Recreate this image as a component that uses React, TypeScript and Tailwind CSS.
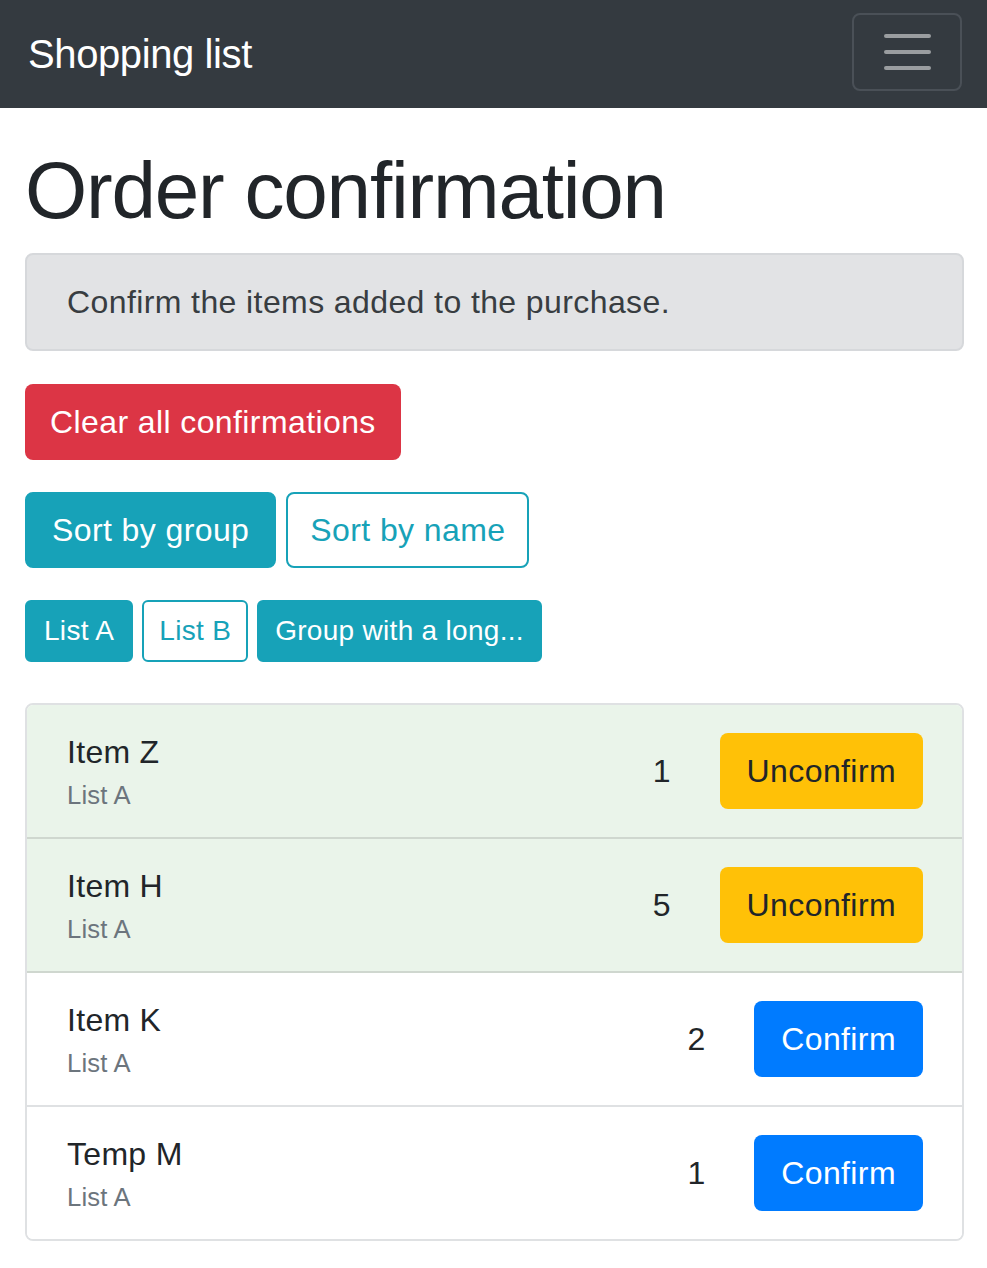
// Order confirmation page – Bootstrap-like look, rendered at 2x scale

const items = [
  { name: "Item Z", group: "List A", qty: 1, confirmed: true },
  { name: "Item H", group: "List A", qty: 5, confirmed: true },
  { name: "Item K", group: "List A", qty: 2, confirmed: false },
  { name: "Temp M", group: "List A", qty: 1, confirmed: false },
];

export default function App() {
  return (
    <div className="min-h-screen bg-white text-[#212529] font-['Liberation_Sans',Arial,sans-serif]">
      {/* ====== Navbar ====== */}
      <nav className="h-[108px] bg-[#343a40] flex items-center justify-between pl-[28px] pr-[25px]">
        <span className="text-white text-[40px] leading-[60px] tracking-[-0.4px]">Shopping list</span>
        <button className="-mt-[4px] w-[110px] h-[78px] rounded-[8px] border-2 border-[#4a5057] flex flex-col items-center justify-center gap-[12px]">
          <span className="block w-[47px] h-[4px] rounded-full bg-[#9a9da0]" />
          <span className="block w-[47px] h-[4px] rounded-full bg-[#9a9da0]" />
          <span className="block w-[47px] h-[4px] rounded-full bg-[#9a9da0]" />
        </button>
      </nav>

      {/* ====== Main ====== */}
      <main className="pl-[25px] pr-[23px] pt-[35px]">
        <h1 className="text-[80px] leading-[96px] tracking-[-1.2px] mb-[14px]">Order confirmation</h1>

        <div className="bg-[#e2e3e5] border-2 border-[#d6d8db] rounded-[8px] px-[40px] py-[23px] text-[#383d41] text-[32px] leading-[48px] tracking-[0.4px] mb-[33px]">
          Confirm the items added to the purchase.
        </div>

        <button className="h-[76px] px-[25px] rounded-[8px] bg-[#dc3545] text-white text-[32px] tracking-[0.4px] mb-[32px]">
          Clear all confirmations
        </button>

        <div className="flex gap-[10px] mb-[32px]">
          <button className="h-[76px] px-[25px] rounded-[8px] bg-[#17a2b8] border-2 border-[#17a2b8] text-white text-[32px] tracking-[0.4px]">
            Sort by group
          </button>
          <button className="h-[76px] px-[22px] rounded-[8px] bg-white border-2 border-[#17a2b8] text-[#17a2b8] text-[32px] tracking-[0.4px]">
            Sort by name
          </button>
        </div>

        <div className="flex gap-[9px] mb-[41px]">
          <button className="h-[62px] px-[17px] rounded-[6px] bg-[#17a2b8] border-2 border-[#17a2b8] text-white text-[28px] tracking-[0.3px]">
            List A
          </button>
          <button className="h-[62px] px-[15px] rounded-[6px] bg-white border-2 border-[#17a2b8] text-[#17a2b8] text-[28px] tracking-[0.3px]">
            List B
          </button>
          <button className="h-[62px] px-[16px] rounded-[6px] bg-[#17a2b8] border-2 border-[#17a2b8] text-white text-[28px] tracking-[0.3px]">
            Group with a long...
          </button>
        </div>

        {/* ====== Item list ====== */}
        <ul className="border-2 border-[#dfe1e3] rounded-[8px] overflow-hidden mb-[28px]">
          {items.map((it, i) => (
            <li
              key={it.name}
              className={`flex items-center pl-[40px] pr-[39px] ${
                i > 0
                  ? `h-[134px] border-t-2 ${it.confirmed || items[i - 1].confirmed ? "border-[#cfd7cf]" : "border-[#dfe1e3]"}`
                  : "h-[132px]"
              } ${it.confirmed ? "bg-[#eaf4ea]" : "bg-white"}`}
            >
              <div className="flex-1 flex flex-col">
                <span className="text-[32px] leading-[48px] tracking-[0.3px]">{it.name}</span>
                <span className="text-[25.6px] leading-[38px] text-[#6c757d] tracking-[0.2px]">{it.group}</span>
              </div>
              <span className="text-[32px] leading-[48px] mr-[49px]">{it.qty}</span>
              {it.confirmed ? (
                <button className="h-[76px] px-[27px] rounded-[8px] bg-[#ffc107] text-[#212529] text-[32px] tracking-[0.4px]">
                  Unconfirm
                </button>
              ) : (
                <button className="h-[76px] px-[27px] rounded-[8px] bg-[#007bff] text-white text-[32px] tracking-[0.4px]">
                  Confirm
                </button>
              )}
            </li>
          ))}
        </ul>
      </main>
    </div>
  );
}
